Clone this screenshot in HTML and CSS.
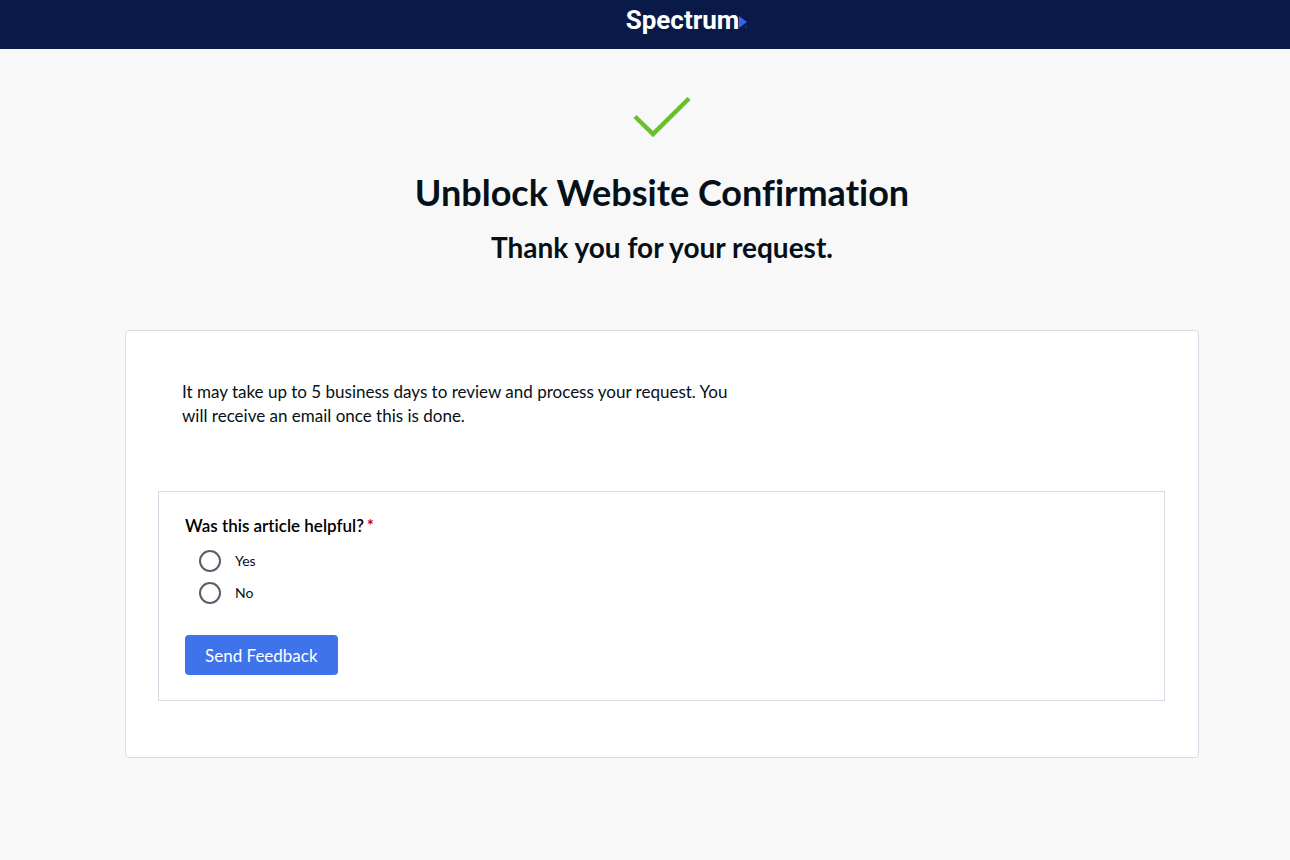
FILE: index.html
```
<!DOCTYPE html>
<html lang="en">
<head>
    <meta charset="UTF-8">
    <meta name="viewport" content="width=device-width, initial-scale=1.0">
    <title>Unblock Website Confirmation</title>
    <link rel="stylesheet" href="styles.css">
</head>
<body>
    <header class="site-header">
        <a class="logo" href="#" aria-label="Spectrum">
            <span class="logo-text">Spectrum</span>
            <svg class="logo-arrow" width="9" height="14" viewBox="0 0 9 14" aria-hidden="true">
                <path d="M0 1L8 7L0 13Z" fill="#2f62f5"/>
                <circle cx="7" cy="12" r="1" fill="#1c3a9a"/>
            </svg>
        </a>
    </header>

    <main class="page">
        <div class="confirmation">
            <svg class="check" width="58" height="41" viewBox="0 0 58 41" aria-hidden="true">
                <path d="M2 19.500L20 37L56 1.500" fill="none" stroke="#6bbf2c" stroke-width="4.500"/>
            </svg>
            <h1>Unblock Website Confirmation</h1>
            <h2>Thank you for your request.</h2>
        </div>

        <section class="card">
            <p class="message">It may take up to 5 business days to review and process your request. You will receive an email once this is done.</p>

            <form class="feedback">
                <fieldset class="question">
                    <legend>Was this article helpful?<span class="required">*</span></legend>
                    <div class="option">
                        <input type="radio" id="helpful-yes" name="helpful" value="yes" required>
                        <label for="helpful-yes">Yes</label>
                    </div>
                    <div class="option">
                        <input type="radio" id="helpful-no" name="helpful" value="no">
                        <label for="helpful-no">No</label>
                    </div>
                </fieldset>
                <button type="submit">Send Feedback</button>
            </form>
        </section>
    </main>
</body>
</html>
```

FILE: styles.css
```
* {
    box-sizing: border-box;
}
body {
    margin: 0;
    background-color: #f8f8f8;
    color: #061018;
    font-family: Lato, "Open Sans", sans-serif;
    font-size: 17px;
    font-variant-ligatures: none;
    line-height: 24px;
}

/* Header */
.site-header {
    display: flex;
    justify-content: center;
    height: 49px;
    padding: 6px 0 0 84px;
    background-color: #091a48;
}
.logo {
    display: flex;
    align-items: flex-start;
    height: 30px;
    color: #fff;
    text-decoration: none;
}
.logo-text {
    font-family: Roboto, Arial, sans-serif;
    font-size: 26px;
    font-weight: bold;
    line-height: 28px;
}
.logo-arrow {
    margin-top: 9px;
}

/* Confirmation */
.page {
    padding: 48px 91px 40px 125px;
}
.confirmation {
    text-align: center;
}
.check {
    display: block;
    margin: 0 auto;
}
h1 {
    margin: 30px 0 13px;
    font-size: 36px;
    font-weight: 700;
    line-height: 48px;
}
h2 {
    margin: 0;
    font-size: 28px;
    font-weight: 700;
    line-height: 36px;
}

/* Card */
.card {
    margin-top: 65px;
    padding: 49px 33px 56px 32px;
    background-color: #fff;
    border: 1px solid #d9d9e6;
    border-radius: 4px;
}
.message {
    max-width: 580px;
    margin: 0 0 63px;
    padding-left: 24px;
}
.feedback {
    padding: 22px 26px 25px;
    border: 1px solid #d9d9e6;
}
.question {
    margin: 0 0 26px;
    padding: 0;
    border: none;
}
.question legend {
    margin-bottom: 7px;
    padding: 0;
    color: #000;
    font-weight: 600;
}
.required {
    margin-left: 3px;
    color: #c00;
}
.option {
    display: flex;
    align-items: center;
    gap: 14px;
    height: 32px;
    padding-left: 14px;
    font-size: 14px;
}
.option input {
    appearance: none;
    width: 22px;
    height: 22px;
    margin: 0;
    border: 2px solid #5b5e69;
    border-radius: 50%;
    background-color: #fff;
}
.option input:checked {
    border: 6px solid #3e73ea;
}
.feedback button {
    display: block;
    height: 40px;
    padding: 0 20px;
    border: none;
    border-radius: 4px;
    background-color: #3e73ea;
    color: #fff;
    font-family: inherit;
    font-size: 17px;
    cursor: pointer;
}
.feedback button:hover {
    background-color: #2b5fd6;
}
```
